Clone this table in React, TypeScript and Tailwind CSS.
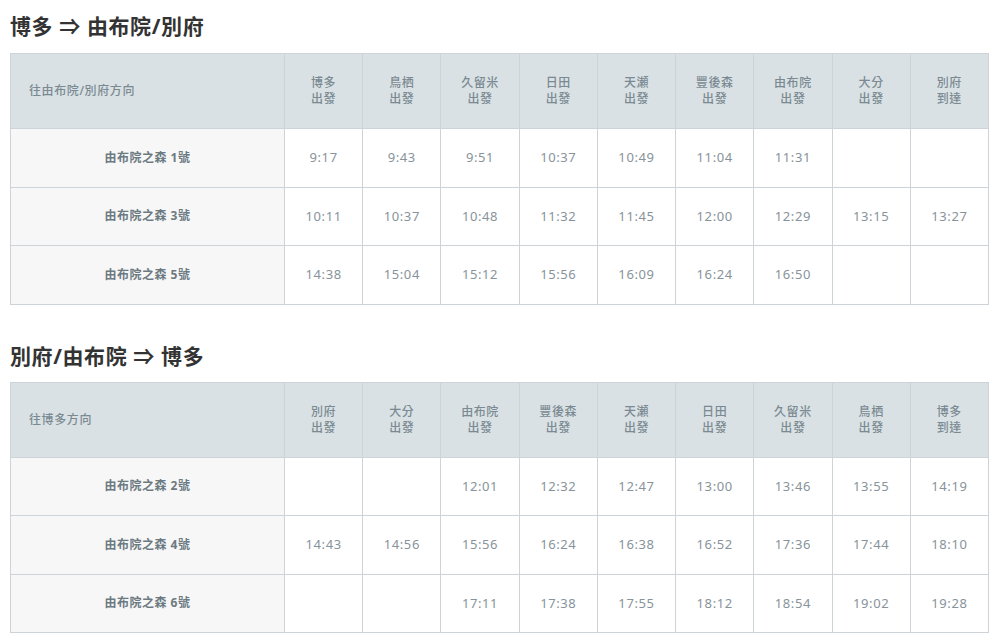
const outbound = {
    title: '博多 ⇒ 由布院/別府',
    direction: '往由布院/別府方向',
    stations: [
        ['博多', '出發'], ['鳥栖', '出發'], ['久留米', '出發'], ['日田', '出發'], ['天瀬', '出發'],
        ['豐後森', '出發'], ['由布院', '出發'], ['大分', '出發'], ['別府', '到達'],
    ],
    trains: [
        { name: '由布院之森 1號', times: ['9:17', '9:43', '9:51', '10:37', '10:49', '11:04', '11:31', '', ''] },
        { name: '由布院之森 3號', times: ['10:11', '10:37', '10:48', '11:32', '11:45', '12:00', '12:29', '13:15', '13:27'] },
        { name: '由布院之森 5號', times: ['14:38', '15:04', '15:12', '15:56', '16:09', '16:24', '16:50', '', ''] },
    ],
};

const inbound = {
    title: '別府/由布院 ⇒ 博多',
    direction: '往博多方向',
    stations: [
        ['別府', '出發'], ['大分', '出發'], ['由布院', '出發'], ['豐後森', '出發'], ['天瀬', '出發'],
        ['日田', '出發'], ['久留米', '出發'], ['鳥栖', '出發'], ['博多', '到達'],
    ],
    trains: [
        { name: '由布院之森 2號', times: ['', '', '12:01', '12:32', '12:47', '13:00', '13:46', '13:55', '14:19'] },
        { name: '由布院之森 4號', times: ['14:43', '14:56', '15:56', '16:24', '16:38', '16:52', '17:36', '17:44', '18:10'] },
        { name: '由布院之森 6號', times: ['', '', '17:11', '17:38', '17:55', '18:12', '18:54', '19:02', '19:28'] },
    ],
};

type Timetable = typeof outbound;

const TimetableSection: React.FC<{ data: Timetable; first?: boolean }> = ({ data, first }) => {
    return (
        <section className={first ? 'pt-[10px]' : 'pt-[35px]'}>
            <h2 className="text-[21px] leading-[32px] font-bold text-[#333333] tracking-[0.6px]">{data.title}</h2>
            <table className={`table-fixed border-collapse w-[979px] ${first ? 'mt-[11px]' : 'mt-[10px]'}`}>
                <colgroup>
                    <col className="w-[274px]" />
                    {data.stations.map((_, i) => (
                        <col key={i} />
                    ))}
                </colgroup>
                <thead>
                    <tr className="h-[75px] bg-[#d9e1e4]">
                        <th className="border border-[#cdd3d6] text-left pl-[18px] text-[12px] font-medium text-[#7b8a92] tracking-[0.6px]">
                            {data.direction}
                        </th>
                        {data.stations.map((s, i) => (
                            <th key={i} className="border border-[#cdd3d6] text-center text-[12px] leading-[16px] font-medium text-[#7b8a92] tracking-[0.6px]">
                                {s[0]}
                                <br />
                                {s[1]}
                            </th>
                        ))}
                    </tr>
                </thead>
                <tbody>
                    {data.trains.map((t, i) => (
                        <tr key={i} className="h-[58.5px]">
                            <td className="border border-[#cdd3d6] bg-[#f7f7f7] text-center text-[12px] font-bold text-[#6c7a82] tracking-[0.5px]">
                                {t.name}
                            </td>
                            {t.times.map((time, j) => (
                                <td key={j} className="border border-[#cdd3d6] bg-white text-center text-[13px] text-[#87939a] tracking-[0.6px]">
                                    {time}
                                </td>
                            ))}
                        </tr>
                    ))}
                </tbody>
            </table>
        </section>
    );
};

export default function App() {
    return (
        <div
            className="w-[1000px] h-[643px] bg-white pl-[10px] overflow-hidden"
            style={{ fontFamily: '"Noto Sans", "Noto Sans CJK TC", sans-serif' }}
        >
            <TimetableSection data={outbound} first />
            <TimetableSection data={inbound} />
        </div>
    );
}
